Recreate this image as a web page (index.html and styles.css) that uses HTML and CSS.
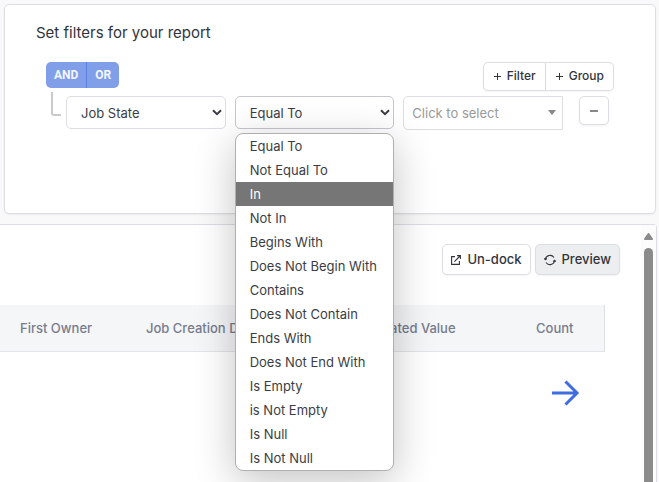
FILE: index.html
```
<!DOCTYPE html>
<html lang="en">
<head>
    <meta charset="UTF-8">
    <meta name="viewport" content="width=device-width, initial-scale=1.0">
    <title>Report Filters</title>
    <link rel="stylesheet" href="styles.css">
</head>
<body>
    <section class="filter-card">
        <h1>Set filters for your report</h1>
        <div class="filter-top">
            <div class="logic-group">
                <button type="button">AND</button>
                <button type="button">OR</button>
            </div>
            <div class="add-group">
                <button type="button">
                    <svg width="9" height="9" viewBox="0 0 9 9"><path d="M4.5 1v7M1 4.5h7" stroke="currentColor" stroke-width="1"/></svg>
                    Filter
                </button>
                <button type="button">
                    <svg width="9" height="9" viewBox="0 0 9 9"><path d="M4.5 1v7M1 4.5h7" stroke="currentColor" stroke-width="1"/></svg>
                    Group
                </button>
            </div>
        </div>
        <div class="filter-row">
            <span class="branch"></span>
            <div class="field">
                <select aria-label="Field">
                    <option>Job State</option>
                </select>
                <svg class="chevron" width="10" height="7" viewBox="0 0 10 7"><path d="M1 1.2l4 4 4-4" fill="none" stroke="currentColor" stroke-width="2"/></svg>
            </div>
            <div class="field">
                <select class="active" aria-label="Operator">
                    <option>Equal To</option>
                </select>
                <svg class="chevron" width="10" height="7" viewBox="0 0 10 7"><path d="M1 1.2l4 4 4-4" fill="none" stroke="currentColor" stroke-width="2"/></svg>
                <!-- Operator menu, shown open -->
                <ul class="menu" role="listbox" aria-label="Operators">
                    <li role="option">Equal To</li>
                    <li role="option">Not Equal To</li>
                    <li role="option" class="highlight" aria-selected="true">In</li>
                    <li role="option">Not In</li>
                    <li role="option">Begins With</li>
                    <li role="option">Does Not Begin With</li>
                    <li role="option">Contains</li>
                    <li role="option">Does Not Contain</li>
                    <li role="option">Ends With</li>
                    <li role="option">Does Not End With</li>
                    <li role="option">Is Empty</li>
                    <li role="option">is Not Empty</li>
                    <li role="option">Is Null</li>
                    <li role="option">Is Not Null</li>
                </ul>
            </div>
            <div class="field">
                <select class="value" aria-label="Value">
                    <option>Click to select</option>
                </select>
                <svg class="caret" width="8" height="5" viewBox="0 0 8 5"><path d="M0 0h8L4 5z" fill="currentColor"/></svg>
            </div>
            <button type="button" class="remove" aria-label="Remove filter">
                <svg width="8" height="2" viewBox="0 0 8 2"><path d="M0 1h8" stroke="currentColor" stroke-width="2"/></svg>
            </button>
        </div>
    </section>

    <section class="report">
        <div class="report-main">
            <div class="toolbar">
                <button type="button">
                    <svg width="10" height="10" viewBox="0 0 10 10" fill="none" stroke="currentColor" stroke-width="1.1"><path d="M4 1.6H.6v7.8h7.8V6M3.4 6.6L9 1M6 .6h3.4V4"/></svg>
                    Un-dock
                </button>
                <button type="button" class="preview">
                    <svg width="12" height="12" viewBox="0 0 12 12" fill="none" stroke="currentColor" stroke-width="1.1"><path d="M1.300 5.500A4.800 4.800 0 0 1 10 3.500M10.700 6.500A4.800 4.800 0 0 1 2 8.500"/><path d="M0 4.300l1.400 1.500 1.500-1.500M12 7.700l-1.400-1.500-1.500 1.500"/></svg>
                    Preview
                </button>
            </div>
            <table>
                <thead>
                    <tr>
                        <th class="col-owner">First Owner</th>
                        <th class="col-date">Job Creation Date</th>
                        <th class="col-value">Estimated Value</th>
                        <th>Count</th>
                    </tr>
                </thead>
            </table>
            <a class="next" href="#" aria-label="Next">
                <svg width="28" height="26" viewBox="0 0 28 26" fill="none" stroke="currentColor" stroke-width="3"><path d="M0 13h25M13.500 1.500L25 13 13.500 24.500"/></svg>
            </a>
        </div>
        <div class="scrollbar">
            <svg width="9" height="7" viewBox="0 0 9 7"><path d="M4.500 1L8 6H1z" fill="currentColor" stroke="currentColor" stroke-width="2" stroke-linejoin="round"/></svg>
            <span class="thumb"></span>
        </div>
    </section>
</body>
</html>
```
FILE: styles.css
```
* {
    box-sizing: border-box;
}
body {
    font-family: Inter, Arial, sans-serif;
    font-size: 13px;
    color: #32343c;
    margin: 0;
    height: 100vh;
    display: flex;
    flex-direction: column;
    background-color: #f9f9f9;
    overflow: hidden;
}
button, select {
    font: inherit;
    color: inherit;
    margin: 0;
}
button {
    display: flex;
    align-items: center;
    justify-content: center;
    background-color: #fff;
    border: 1px solid #dddee3;
    border-radius: 5px;
    padding: 0;
}

/* Filter card */
.filter-card {
    margin: 4px 3px 10px 4px;
    height: 210px;
    padding: 17px 41px 0 31px;
    background-color: #fff;
    border: 1px solid #dddee3;
    border-radius: 5px;
    box-shadow: 0 1px 2px rgba(0, 0, 0, 0.05);
}
h1 {
    font-size: 15px;
    font-weight: 400;
    line-height: 22px;
    margin: 0 0 18px;
}
.filter-top {
    display: flex;
    justify-content: space-between;
    height: 34px;
    padding-left: 10px;
}
.logic-group, .add-group {
    display: flex;
}
.logic-group {
    height: 26px;
}
.logic-group button {
    padding: 0 8px;
    color: #f3f6fd;
    background-color: #819fe9;
    border: 0;
    font-family: Roboto, Arial, sans-serif;
    font-size: 12px;
    font-weight: 700;
}
.add-group {
    height: 29px;
}
.add-group button {
    gap: 5px;
    padding: 0 9px 2px;
    font-size: 12px;
    font-weight: 500;
    box-shadow: 0 1px 2px rgba(0, 0, 0, 0.05);
}
.add-group svg, .toolbar svg {
    margin-top: 2px;
}
.logic-group button:first-child, .add-group button:first-child {
    border-radius: 5px 0 0 5px;
}
.logic-group button:last-child, .add-group button:last-child {
    border-radius: 0 5px 5px 0;
}
.logic-group button:last-child {
    border-left: 1px solid #5c82dd;
}
.add-group button:last-child {
    border-left: 0;
}
.filter-row {
    display: flex;
    align-items: flex-start;
    gap: 9px;
    padding: 0 5px 0 15px;
}
.branch {
    width: 10px;
    height: 24px;
    margin: -4px -4px 0 0;
    border: solid #c9cacc;
    border-width: 0 0 2px 2px;
    border-radius: 0 0 0 3px;
}
.field {
    position: relative;
    flex: 1;
    color: #3b3d45;
}
select {
    display: block;
    appearance: none;
    width: 100%;
    height: 33px;
    padding: 0 14px;
    background-color: #fff;
    border: 1px solid #dddee3;
    border-radius: 5px;
}
select.active {
    border-color: #c5c6d0;
}
select.value {
    height: 34px;
    padding: 0 8px;
    color: #999;
    border-radius: 5px 0 0 5px;
}
.chevron, .caret {
    position: absolute;
    top: 13px;
    right: 4px;
    pointer-events: none;
}
.caret {
    top: 14px;
    right: 7px;
    color: #888;
}
.remove {
    width: 30px;
    height: 29px;
    margin-left: 7px;
    color: #888;
    box-shadow: 0 1px 2px rgba(0, 0, 0, 0.05);
}

/* Operator menu */
.menu {
    position: absolute;
    z-index: 1;
    top: 37px;
    left: 0;
    width: 100%;
    margin: 0;
    padding: 0;
    list-style: none;
    overflow: hidden;
    background-color: #fff;
    border: 1px solid #b0b0b0;
    border-radius: 8px;
    box-shadow: 0 10px 40px rgba(0, 0, 0, 0.24);
}
.menu li {
    height: 24px;
    line-height: 24px;
    padding: 0 14px;
}
.menu .highlight {
    color: #fff;
    background-color: #767676;
}

/* Report preview */
.report {
    flex: 1;
    display: flex;
    margin-right: 2px;
    background-color: #fff;
    border: 1px solid #dddee3;
    border-width: 1px 1px 0 0;
    border-radius: 0 4px 0 0;
}
.report-main {
    flex: 1;
    padding: 19px 36px 0 0;
}
.toolbar {
    display: flex;
    justify-content: flex-end;
    gap: 4px;
    margin: 0 -15px 30px 0;
}
.toolbar button {
    height: 31px;
    gap: 6px;
    padding: 0 8px 2px;
    font-weight: 500;
    box-shadow: 0 1px 2px rgba(0, 0, 0, 0.05);
}
.toolbar .preview {
    background-color: #eceef0;
}
table {
    width: 100%;
    table-layout: fixed;
    border-spacing: 0;
    background-color: #f5f6f8;
    border-right: 1px solid #dddee3;
    border-bottom: 1px solid #e3e4e9;
}
th {
    height: 46px;
    padding: 0 0 0 20px;
    color: #777c8d;
    font-weight: 500;
    text-align: left;
    white-space: nowrap;
}
.col-owner {
    width: 126px;
}
.col-date {
    width: 210px;
}
.col-value {
    width: 180px;
}
.next {
    display: flex;
    justify-content: flex-end;
    padding: 28px 25px 0 0;
    color: #3d6ddf;
}
.scrollbar {
    width: 15px;
    display: flex;
    flex-direction: column;
    align-items: center;
    gap: 8px;
    padding-top: 8px;
    color: #8b8b8b;
    background-color: #fcfcfc;
}
.thumb {
    flex: 1;
    width: 9px;
    background-color: #8b8b8b;
    border-radius: 5px 5px 0 0;
}
```
